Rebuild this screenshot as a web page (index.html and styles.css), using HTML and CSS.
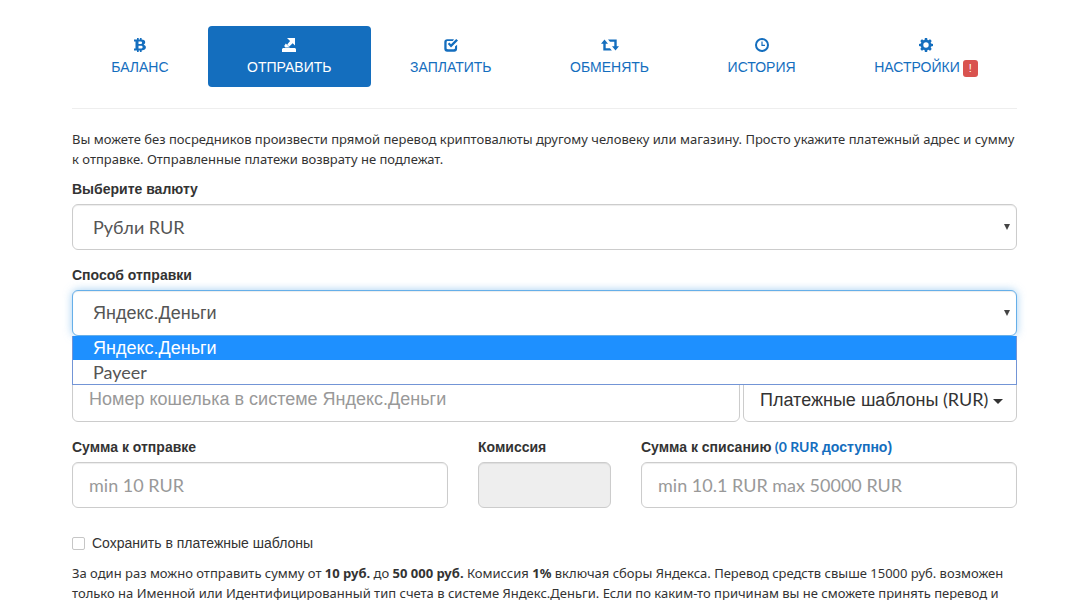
FILE: index.html
```html
<!DOCTYPE html>
<html lang="ru">
<head>
<meta charset="utf-8">
<meta name="viewport" content="width=device-width, initial-scale=1">
<title>Отправить</title>
<link rel="stylesheet" href="styles.css">
</head>
<body>
<main class="page">
  <nav class="tabs">
    <a class="tab" href="#balance">
      <svg class="icon" viewBox="0 0 14 14" aria-hidden="true"><path fill-rule="evenodd" d="M1 1.500h3V0h1.700v1.500h1.200V0h1.700v1.600c2.300.1 3.600 1 3.600 2.700 0 1.200-.6 2-1.600 2.400 1.500.4 2.300 1.300 2.300 2.600 0 2-1.500 3-4.300 3.100V14H6.900v-1.500H5.700V14H4v-1.500H1v-1.900h1.500V3.400H1zM5.500 3.500v2.500h1.800c1.200 0 1.800-.4 1.800-1.300 0-.8-.6-1.200-1.800-1.200zm0 4.300v2.700h2.100c1.300 0 2-.4 2-1.300 0-.9-.7-1.400-2-1.400z"/></svg>
      <span>БАЛАНС</span>
    </a>
    <a class="tab tab-active" href="#send" aria-current="page">
      <svg class="icon" viewBox="0 0 14 14" aria-hidden="true"><path d="M5 0h8v7.500L10.700 5.300 7.300 8.600 5.200 6.500 8.100 3.100zM3.800 5.500l4 4H3.300L2.200 8z M1 10h12l1 1v3H0v-3z"/></svg>
      <span>ОТПРАВИТЬ</span>
    </a>
    <a class="tab" href="#pay">
      <svg class="icon" viewBox="0 0 14 14" aria-hidden="true"><path d="M10 1.200 8.800 3H3.800c-.8 0-1.200.4-1.200 1.200v5.900c0 .8.4 1.200 1.200 1.200h6c.8 0 1.200-.4 1.200-1.200V8.600l2.100-1.800v4c0 1.800-1.100 2.900-2.900 2.900H3.200C1.400 13.700.3 12.600.3 10.800V3.900C.3 2.200 1.400 1.200 3.200 1.200z"/><path d="m3.800 6 1.500-1.500L7 6.200l5.200-5.200L14 2.600 7 9.600z"/></svg>
      <span>ЗАПЛАТИТЬ</span>
    </a>
    <a class="tab" href="#exchange">
      <svg class="icon icon-wide" viewBox="0 0 18 14" aria-hidden="true"><path d="M3.500 1.500 7 5.700H4.700v4.600h4.200l2 2.200H2.300V5.700H0z M7 1.500h8.700v6.800H18l-3.500 4.200L11 8.300h2.300V3.800H9z"/></svg>
      <span>ОБМЕНЯТЬ</span>
    </a>
    <a class="tab" href="#history">
      <svg class="icon" viewBox="0 0 14 14" aria-hidden="true"><circle class="stroke" cx="7" cy="7" r="6"/><path d="M6.400 3.500h1.200v3.300H10V8H6.400z"/></svg>
      <span>ИСТОРИЯ</span>
    </a>
    <a class="tab" href="#settings">
      <svg class="icon" viewBox="0 0 14 14" aria-hidden="true"><path fill-rule="evenodd" d="M5.900 0h2.200l.4 1.900.9.4L11.100 1.300l1.600 1.600-1 1.700.4.900 1.900.4v2.200l-1.900.4-.4.900 1 1.700-1.600 1.600-1.700-1-.9.400L8.100 14H5.900l-.4-1.900-.9-.4-1.700 1-1.600-1.600 1-1.700-.4-.9L0 8.100V5.900l1.900-.4.4-.9-1-1.700 1.600-1.600 1.700 1 .9-.4zM7 4.300a2.700 2.700 0 1 0 0 5.400 2.700 2.700 0 0 0 0-5.400z"/></svg>
      <span>НАСТРОЙКИ<span class="badge">!</span></span>
    </a>
  </nav>

  <form class="form">
    <p class="text">Вы можете без посредников произвести прямой перевод криптовалюты другому человеку или магазину. Просто укажите платежный адрес и сумму к отправке. Отправленные платежи возврату не подлежат.</p>

    <div class="field">
      <label class="label" for="currency">Выберите валюту</label>
      <div class="select-box">
        <select class="control select latin" id="currency"><option>Рубли RUR</option></select>
        <svg class="arrow" viewBox="0 0 6 6" aria-hidden="true"><path d="M0 0h6L3 6z"/></svg>
      </div>
    </div>

    <div class="field">
      <label class="label" for="method">Способ отправки</label>
      <div class="select-box">
        <select class="control select select-open" id="method"><option>Яндекс.Деньги</option><option>Payeer</option></select>
        <svg class="arrow" viewBox="0 0 6 6" aria-hidden="true"><path d="M0 0h6L3 6z"/></svg>
        <ul class="options" role="listbox" aria-labelledby="method">
          <li class="option option-active" role="option" aria-selected="true">Яндекс.Деньги</li>
          <li class="option latin" role="option" aria-selected="false">Payeer</li>
        </ul>
      </div>
    </div>

    <div class="wallet">
      <input class="control" type="text" placeholder="Номер кошелька в системе Яндекс.Деньги">
      <button class="control templates" type="button">Платежные шаблоны<span class="latin"> (RUR) </span><span class="caret"></span></button>
    </div>

    <div class="sums">
      <div class="sum">
        <label class="label" for="amount">Сумма к отправке</label>
        <input class="control latin" id="amount" type="text" placeholder="min 10 RUR">
      </div>
      <div class="sum fee">
        <label class="label" for="fee">Комиссия</label>
        <input class="control" id="fee" type="text" disabled>
      </div>
      <div class="sum">
        <label class="label" for="total">Сумма к списанию<a class="link" href="#all"><span class="latin"> (0 RUR </span>доступно)</a></label>
        <input class="control latin" id="total" type="text" placeholder="min 10.1 RUR max 50000 RUR">
      </div>
    </div>

    <label class="save"><input class="check" type="checkbox"> Сохранить в платежные шаблоны</label>

    <p class="text">За один раз можно отправить сумму от <b>10 руб.</b> до <b>50 000 руб.</b> Комиссия <b>1%</b> включая сборы Яндекса. Перевод средств свыше 15000 руб. возможен только на Именной или Идентифицированный тип счета в системе Яндекс.Деньги. Если по каким-то причинам вы не сможете принять перевод и</p>
  </form>
</main>
</body>
</html>
```
FILE: styles.css
```css
* { box-sizing: border-box; }

body {
  margin: 0;
  background: #fff;
  color: #333;
  font: 14px/20px "Liberation Sans", Arial, sans-serif;
}

.page { padding: 26px 50px 0 72px; }

.tabs {
  display: flex;
  padding-bottom: 21px;
  border-bottom: 1px solid #eee;
}

.tab {
  display: flex;
  flex: 1 0 auto;
  flex-direction: column;
  align-items: center;
  padding: 10px 15px;
  border-radius: 4px;
  color: #146ebe;
  text-decoration: none;
  white-space: nowrap;
}

.tab-active { background: #146ebe; color: #fff; }

.icon {
  width: 14px;
  height: 14px;
  margin: 2px 0 5px;
  fill: currentColor;
}

.icon-wide { width: 18px; }

.stroke { fill: none; stroke: currentColor; stroke-width: 2; }

.badge {
  display: inline-block;
  margin-left: 3px;
  padding: 3px 6px;
  border-radius: 3px;
  background: #d9534f;
  color: #fff;
  font-size: 11px;
  line-height: 11px;
}

.form { padding-top: 20px; }

.text {
  margin: 0 0 10px;
  font-family: "Noto Sans", sans-serif;
  font-size: 13px;
}

.field { margin-bottom: 15px; }

.label {
  display: block;
  margin-bottom: 5px;
  font-weight: 700;
  white-space: nowrap;
}

.link { color: #146ebe; text-decoration: none; }

.control {
  display: block;
  width: 100%;
  height: 46px;
  padding: 10px 16px;
  border: 1px solid #ccc;
  border-radius: 6px;
  background: #fff;
  box-shadow: inset 0 1px 1px rgba(0, 0, 0, .075);
  color: #555;
  font: inherit;
  font-size: 18px;
  line-height: 24px;
}

.control::placeholder { color: #999; opacity: 1; }

.control:disabled { background: #eee; }

.latin { font-family: Lato, sans-serif; white-space: pre; }

.select-box { position: relative; }

.select { padding-left: 20px; appearance: none; }

.select-open {
  border-color: #66afe9;
  box-shadow: inset 0 1px 1px rgba(0, 0, 0, .075), 0 0 8px rgba(102, 175, 233, .6);
}

.arrow {
  position: absolute;
  top: 20px;
  right: 7px;
  width: 6px;
  height: 6px;
  fill: #444;
  pointer-events: none;
}

.options {
  position: absolute;
  top: 100%;
  right: 0;
  left: 0;
  margin: 0;
  padding: 0;
  border: 1px solid #7395d6;
  border-top: 0;
  background: #fff;
  color: #555;
  font-size: 18px;
  line-height: 24px;
  list-style: none;
}

.option { padding: 0 20px; }

.option-active { background: #1e90ff; color: #fff; }

.wallet {
  display: flex;
  gap: 3px;
  margin: 40px 0 15px;
}

.templates {
  flex: none;
  width: auto;
  box-shadow: none;
  color: #333;
  white-space: nowrap;
}

.caret {
  display: inline-block;
  border: 5px solid transparent;
  border-top-color: currentColor;
  border-bottom: 0;
  vertical-align: middle;
}

.templates .caret { margin-right: -3px; }

.sums {
  display: flex;
  gap: 30px;
  margin-bottom: 25px;
}

.sum { flex: 376 1 0; min-width: 0; }

.fee { flex-grow: 133; }

.save {
  display: flex;
  align-items: center;
  gap: 7px;
  margin-bottom: 10px;
}

.check {
  width: 13px;
  height: 13px;
  margin: 0;
  border: 1px solid #c6c6c6;
  border-radius: 2px;
  background: #fff;
  appearance: none;
}
```
